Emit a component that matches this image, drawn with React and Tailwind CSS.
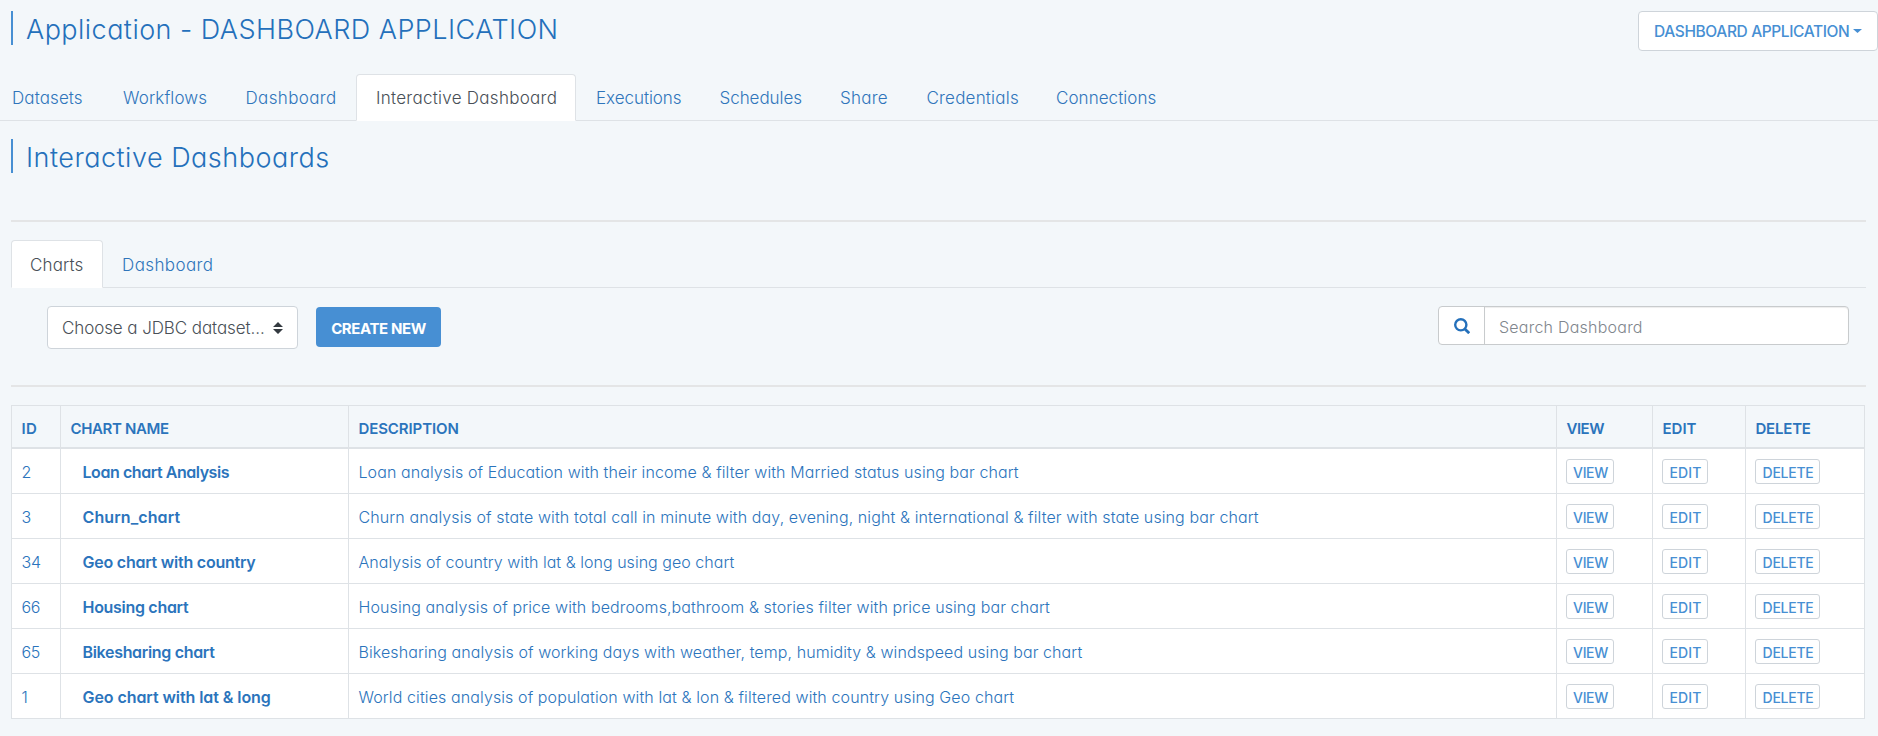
import React from 'react';

const TABS = [
  { label: 'Datasets', cls: 'w-[111px] tracking-[0.1px]' },
  { label: 'Workflows', cls: 'w-[122.5px] tracking-[0.12px]' },
  { label: 'Dashboard', cls: 'w-[130.5px] tracking-[0.36px]' },
  { label: 'Interactive Dashboard', cls: 'w-[220px] tracking-[0.27px]', active: true },
  { label: 'Executions', cls: 'w-[123.5px] tracking-[-0.05px]' },
  { label: 'Schedules', cls: 'w-[120.5px] tracking-[-0.05px]' },
  { label: 'Share', cls: 'w-[86.5px] tracking-[0.25px]' },
  { label: 'Credentials', cls: 'w-[129.5px] tracking-[0.2px]' },
  { label: 'Connections', cls: 'w-[139px] tracking-[0.06px]' },
];

const ROWS = [
  { id: '2', name: 'Loan chart Analysis', nameCls: 'tracking-[-0.44px]', text: 'Loan analysis of Education with their income & filter with Married status using bar chart', textCls: 'tracking-[0.09px]' },
  { id: '3', name: 'Churn_chart', nameCls: 'tracking-[0.1px]', text: 'Churn analysis of state with total call in minute with day, evening, night & international & filter with state using bar chart', textCls: 'tracking-[0.105px]' },
  { id: '34', name: 'Geo chart with country', nameCls: 'tracking-[-0.23px]', text: 'Analysis of country with lat & long using geo chart', textCls: 'tracking-[0.03px]' },
  { id: '66', name: 'Housing chart', nameCls: 'tracking-[-0.3px]', text: 'Housing analysis of price with bedrooms,bathroom & stories filter with price using bar chart', textCls: 'tracking-[0.1px]' },
  { id: '65', name: 'Bikesharing chart', nameCls: 'tracking-[-0.32px]', text: 'Bikesharing analysis of working days with weather, temp, humidity & windspeed using bar chart', textCls: 'tracking-[0.085px]' },
  { id: '1', name: 'Geo chart with lat & long', nameCls: 'tracking-[-0.07px]', text: 'World cities analysis of population with lat & lon & filtered with country using Geo chart', textCls: 'tracking-[0.105px]' },
];

const COLS = 'grid grid-cols-[49px_288px_1208px_96px_93px_120px]';

function Heading({ children, className }) {
  return (
    <h1 className={`flex h-[34px] items-center border-l-2 border-[#478fd3] pt-[2px] text-[27px] leading-none font-light whitespace-nowrap text-[#2470bb] ${className}`}>
      {children}
    </h1>
  );
}

function Tab({ label, cls, active }) {
  const look = active
    ? 'rounded-t border border-[#dee2e6] border-b-white bg-white text-[#495057]'
    : 'border border-transparent text-[#2f75bb]';
  return (
    <a className={`-mb-px flex h-[47px] shrink-0 items-center pt-px pl-[19px] text-[17px] leading-none font-light whitespace-nowrap ${look} ${cls}`}>
      {label}
    </a>
  );
}

function HeadCell({ children, className = '' }) {
  return (
    <div className={`flex items-center border-l border-[#dee2e6] pt-[3px] pl-[9.5px] text-[15px] leading-none font-semibold ${className}`}>
      {children}
    </div>
  );
}

function RowButton({ label, className }) {
  return (
    <button className={`flex h-[25px] items-center justify-center rounded-[3px] border border-[#ced4da] bg-white pt-[2px] pl-px text-[14px] leading-none font-medium text-[#478fd3] ${className}`}>
      {label}
    </button>
  );
}

function Cell({ children, className = '' }) {
  return <div className={`flex items-center border-l border-[#dee2e6] leading-none whitespace-nowrap ${className}`}>{children}</div>;
}

export default function App() {
  return (
    <div className="flex h-[736px] w-[1878px] flex-col overflow-hidden bg-[#f3f7fa] font-[Inter,sans-serif] [font-feature-settings:'cv11']">
      <header className="flex h-[74px] shrink-0 items-start justify-between pt-[11px] pl-[11px]">
        <Heading className="pl-[13px] tracking-[0.46px]">Application - DASHBOARD APPLICATION</Heading>
        <button className="flex h-[40px] w-[240px] items-center rounded border border-[#ced4da] bg-white pt-px pl-[15px] text-[15.5px] leading-none font-medium tracking-[-0.38px] whitespace-nowrap text-[#478fd3]">
          DASHBOARD APPLICATION
          <svg className="-mt-px ml-[4px]" width="9" height="4" viewBox="0 0 9 4" fill="currentColor">
            <path d="M0 0h9L4.500 4z" />
          </svg>
        </button>
      </header>

      <nav className="flex h-[47px] shrink-0 border-b border-[#dee2e6] pr-4">
        <div className="-ml-[8px] flex">
          {TABS.map((t) => <Tab key={t.label} {...t} />)}
        </div>
      </nav>

      <main className="flex flex-col pt-[18px] pr-3 pl-[11px]">
        <Heading className="pl-[13px] tracking-[0.5px]">Interactive Dashboards</Heading>
        <hr className="mt-[47px] h-[2px] w-[1855px] border-0 bg-[#e4e5e6]" />

        <nav className="mt-[18px] flex h-[48px] w-[1855px] border-b border-[#dee2e6]">
          <a className="-mb-px flex h-[48px] w-[92px] items-center rounded-t border border-[#dee2e6] border-b-white bg-white pt-[2px] pl-[18px] text-[17px] leading-none font-light tracking-[0.12px] text-[#495057]">Charts</a>
          <a className="flex h-[48px] items-center pt-[2px] pl-[19px] text-[17px] leading-none font-light tracking-[0.4px] text-[#2f75bb]">Dashboard</a>
        </nav>

        <div className="flex h-[97px] items-start pt-[18px] pl-[36px]">
          <div className="flex h-[43px] w-[251px] items-center justify-between rounded border border-[#ced4da] bg-white pr-[14px] pl-[14px] text-[17px] leading-none font-light tracking-[-0.09px] whitespace-nowrap text-[#495057]">
            <span className="pt-[2px]">Choose a JDBC dataset...</span>
            <svg width="10" height="12" viewBox="0 0 10 12" fill="#343a40">
              <path d="M5 0l5 5H0zM5 12L0 7h10z" />
            </svg>
          </div>
          <button className="mt-px ml-[18px] flex h-[40px] w-[125px] items-center justify-center rounded bg-[#478fd3] pt-[3px] text-[15px] leading-none font-bold tracking-[-0.4px] text-white">
            CREATE NEW
          </button>
          <div className="mr-[17px] ml-auto flex h-[39px] w-[411px] rounded border border-[#c8cbcd] bg-white">
            <div className="flex w-[46px] items-center justify-center border-r border-[#c8cbcd] pt-px">
              <svg width="16" height="16" viewBox="0 0 16 16" fill="none" stroke="#2470bb">
                <circle cx="6.8" cy="6.8" r="5.6" strokeWidth="2.4" />
                <path d="M10.900 10.900l4.300 4.300" strokeWidth="2.8" />
              </svg>
            </div>
            <span className="flex flex-1 items-center rounded-r pt-[2px] pl-[14px] text-[16px] leading-none font-light tracking-[0.23px] text-[#7f868d] shadow-[inset_0_1px_1px_rgba(0,0,0,0.075)]">Search Dashboard</span>
          </div>
        </div>

        <hr className="h-[2px] w-[1855px] border-0 bg-[#e4e5e6]" />

        <section className="mt-[18px] w-[1854px] border-t border-[#dee2e6] text-[#2b74bc]">
          <div className={`${COLS} h-[43px] border-b-2 border-[#dee2e6]`}>
            <HeadCell className="tracking-[0.4px]">ID</HeadCell>
            <HeadCell className="tracking-[-0.35px]">CHART NAME</HeadCell>
            <HeadCell className="tracking-[-0.1px]">DESCRIPTION</HeadCell>
            <HeadCell className="tracking-[-0.49px]">VIEW</HeadCell>
            <HeadCell>EDIT</HeadCell>
            <HeadCell className="border-r tracking-[-0.21px]">DELETE</HeadCell>
          </div>
          {ROWS.map((r) => (
            <div key={r.id} className={`${COLS} h-[45px] border-b border-[#dee2e6] bg-white text-[16px]`}>
              <Cell className="pt-[2px] pl-[9.5px] font-light tracking-[-0.28px]">{r.id}</Cell>
              <Cell className={`pt-[2px] pl-[21.5px] font-semibold ${r.nameCls}`}>{r.name}</Cell>
              <Cell className={`pt-[2px] pl-[9.5px] font-light ${r.textCls}`}>{r.text}</Cell>
              <Cell className="pt-px pl-[9px]"><RowButton label="VIEW" className="w-[48px] tracking-[-0.36px]" /></Cell>
              <Cell className="pt-px pl-[9px]"><RowButton label="EDIT" className="w-[46px] tracking-[0.1px]" /></Cell>
              <Cell className="border-r pt-px pl-[9px]"><RowButton label="DELETE" className="w-[65px] tracking-[-0.27px]" /></Cell>
            </div>
          ))}
        </section>
      </main>
    </div>
  );
}
